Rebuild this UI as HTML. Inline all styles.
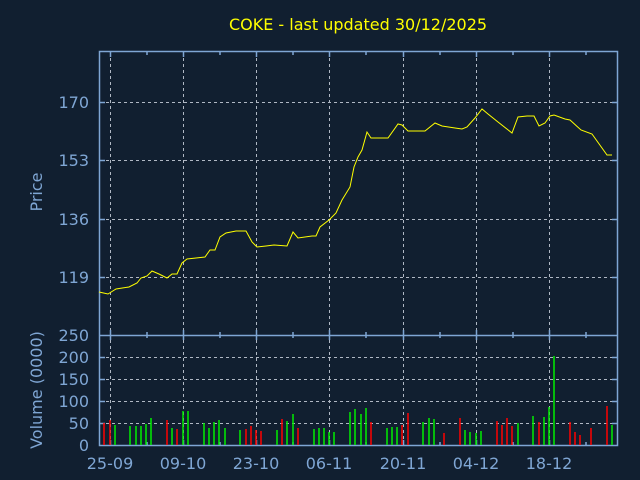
<!DOCTYPE html>
<html><head><meta charset="utf-8"><style>
html,body{margin:0;padding:0;background:#111f30;}
svg{display:block}
text{font-family:"DejaVu Sans","Liberation Sans",sans-serif;}
</style></head><body>
<svg width="640" height="480" viewBox="0 0 640 480" xmlns="http://www.w3.org/2000/svg">
<rect width="640" height="480" fill="#111f30"/>
<text x="358" y="30" fill="#ffff00" font-size="16" text-anchor="middle">COKE - last updated 30/12/2025</text>
<g stroke="#b0b8c4" stroke-width="1" stroke-dasharray="3,3" fill="none">
<path d="M110.5 52V445M183.5 52V445M256.5 52V445M329.5 52V445M403.5 52V445M476.5 52V445M549.5 52V445"/>
<path d="M100 102.5H617M100 160.5H617M100 219.5H617M100 277.5H617"/>
<path d="M100 357.5H617M100 379.5H617M100 401.5H617M100 423.5H617"/>
</g>
<g stroke="#7fa6d4" stroke-width="1.5" fill="none">
<rect x="99.5" y="51.5" width="518" height="394"/>
<path d="M99.5 335.5H617.5"/>
<path d="M110.5 52v5M183.5 52v5M256.5 52v5M329.5 52v5M403.5 52v5M476.5 52v5M549.5 52v5M147 52v3M220 52v3M293 52v3M366 52v3M440 52v3M513 52v3M586 52v3"/>
<path d="M110.5 330v10M183.5 330v10M256.5 330v10M329.5 330v10M403.5 330v10M476.5 330v10M549.5 330v10M147 332v6M220 332v6M293 332v6M366 332v6M440 332v6M513 332v6M586 332v6"/>
<path d="M110.5 445v-5M183.5 445v-5M256.5 445v-5M329.5 445v-5M403.5 445v-5M476.5 445v-5M549.5 445v-5M147 445v-3M220 445v-3M293 445v-3M366 445v-3M440 445v-3M513 445v-3M586 445v-3"/>
<path d="M100 102.5h5M100 160.5h5M100 219.5h5M100 277.5h5M617 102.5h-5M617 160.5h-5M617 219.5h-5M617 277.5h-5"/>
<path d="M100 357.5h5M100 379.5h5M100 401.5h5M100 423.5h5M617 357.5h-5M617 379.5h-5M617 401.5h-5M617 423.5h-5"/>
</g>
<g fill="#7fa6d4" font-size="16" text-anchor="end">
<text x="89" y="108">170</text><text x="89" y="166">153</text><text x="89" y="225">136</text><text x="89" y="283">119</text>
<text x="89" y="341">250</text><text x="89" y="363">200</text><text x="89" y="385">150</text><text x="89" y="407">100</text><text x="89" y="429">50</text><text x="89" y="451">0</text>
</g>
<g fill="#7fa6d4" font-size="16" text-anchor="middle">
<text x="110" y="469">25-09</text><text x="183" y="469">09-10</text><text x="256" y="469">23-10</text><text x="329" y="469">06-11</text><text x="403" y="469">20-11</text><text x="476" y="469">04-12</text><text x="549" y="469">18-12</text>
<text transform="translate(42,192) rotate(-90)">Price</text>
<text transform="translate(42,390) rotate(-90)">Volume (0000)</text>
</g>
<polyline fill="none" stroke="#ffff00" stroke-width="1" points="99,292 108,294 116,289 129,287 137,283 141,278 147,276 152,271 159,274 167,278 172,274 177,274 182,263 187,259 196,258 205,257 210,250 215,250 220,237 226,233 236,231 246,231 252,242 257,247 266,246 274,245 287,246 293,232 298,238 312,236 316,236 320,227 329,220 336,213 342,200 350,187 354,167 358,157 362,150 367,132 371,138 388,138 398,124 402,125 408,131 425,131 435,123 442,126 455,128 462,129 467,127 475,118 482,109 488,114 498,122 512,133 518,117 527,116 534,116 539,126 545,123 550,116 554,115 565,119 570,120 581,130 592,134 607,155 612,155"/>
<g stroke-width="1.5">
<path stroke="#ff0000" d="M104 445V423M110 445V420M167 445V420M177 445V429M246 445V429M251 445V426M256 445V430M261 445V431M282 445V419M298 445V428M371 445V422M402 445V425M408 445V413M444 445V433M460 445V418M497 445V421M502 445V425M507 445V418M512 445V426M539 445V422M570 445V422M575 445V432M580 445V435M591 445V428M607 445V406"/>
<path stroke="#00ee00" d="M115 445V425M130 445V426M136 445V426M141 445V426M146 445V424M151 445V418M172 445V428M183 445V411M188 445V411M204 445V423M209 445V428M214 445V422M219 445V420M225 445V428M240 445V430M277 445V430M287 445V421M293 445V414M314 445V429M319 445V428M324 445V428M329 445V432M334 445V432M350 445V412M355 445V409M361 445V414M366 445V408M387 445V428M392 445V427M397 445V427M423 445V422M429 445V418M434 445V419M465 445V430M470 445V432M476 445V433M481 445V431M518 445V423M533 445V416M544 445V417M549 445V407M554 445V356M612 445V425"/>
</g>
</svg>
</body></html>
